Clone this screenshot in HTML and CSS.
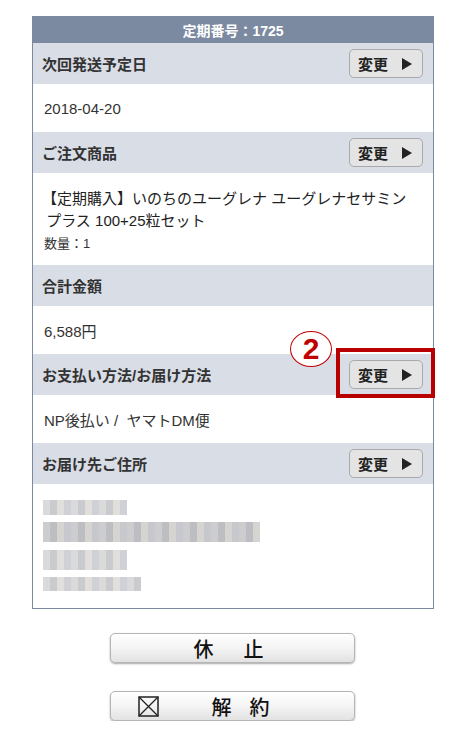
FILE: index.html
```html
<!DOCTYPE html>
<html lang="ja">
<head>
<meta charset="utf-8">
<link rel="stylesheet" href="styles.css">
</head>
<body>
<div class="page">
  <div class="card">
    <div class="title">定期番号：1725</div>

    <div class="head"><span class="label">次回発送予定日</span><span class="btn">変更<span class="tri"></span></span></div>
    <div class="body row">2018-04-20</div>

    <div class="head"><span class="label">ご注文商品</span><span class="btn">変更<span class="tri"></span></span></div>
    <div class="body product">
      <div class="pname">【定期購入】いのちのユーグレナ ユーグレナセサミン<br>&nbsp;プラス 100+25粒セット</div>
      <div class="qty">数量：1</div>
    </div>

    <div class="head"><span class="label">合計金額</span></div>
    <div class="body row">6,588円</div>

    <div class="head mark"><span class="label">お支払い方法/お届け方法</span><span class="btn">変更<span class="tri"></span></span>
      <span class="redbox"></span>
      <span class="circle">2</span>
    </div>
    <div class="body row">NP後払い / &nbsp;ヤマトDM便</div>

    <div class="head"><span class="label">お届け先ご住所</span><span class="btn">変更<span class="tri"></span></span></div>
    <div class="body address">
      <div class="blur b1"></div>
      <div class="blur b2"></div>
      <div class="blur b3"></div>
      <div class="blur b4"></div>
    </div>
  </div>

  <div class="actions">
    <div class="bigbtn pause"><span>休</span><span>止</span></div>
    <div class="bigbtn cancel"><span class="xbox"><svg width="21" height="21" viewBox="0 0 21 21"><rect x="1" y="1" width="19" height="19" fill="none" stroke="#222" stroke-width="1.5"/><path d="M1 1L20 20M20 1L1 20" stroke="#222" stroke-width="1.3"/></svg></span><span>解</span><span>約</span></div>
  </div>
</div>
</body>
</html>
```

FILE: styles.css
```css
* { box-sizing: border-box; }
body {
  margin: 0;
  background: #fff;
  font-family: "Liberation Sans", "Noto Sans CJK JP", sans-serif;
  color: #333;
}
.page {
  padding: 16px 0 0 32px;
  width: 468px;
}
.card {
  width: 402px;
  border: 1px solid #7b8aa0;
  border-top: none;
  background: #fff;
}
.title {
  height: 27px;
  background: #7b8aa0;
  color: #fff;
  font-weight: bold;
  font-size: 14px;
  display: flex;
  align-items: center;
  justify-content: center;
  margin: 0 -1px;
}
.head {
  position: relative;
  height: 41px;
  background: #d9dde6;
  display: flex;
  align-items: center;
  justify-content: space-between;
  padding: 0 10px 0 9px;
}
.label {
  font-size: 15px;
  font-weight: bold;
  color: #333;
}
.btn {
  width: 74px;
  height: 29px;
  border: 1px solid #a9a9a9;
  border-radius: 5px;
  background: #e4e4e4;
  display: flex;
  align-items: center;
  justify-content: center;
  gap: 14px;
  font-size: 15px;
  font-weight: bold;
  color: #222;
  padding-right: 2px;
}
.tri {
  width: 0;
  height: 0;
  border-left: 10px solid #222;
  border-top: 6px solid transparent;
  border-bottom: 6px solid transparent;
}
.body {
  font-size: 15px;
  color: #333;
}
.row {
  height: 48px;
  display: flex;
  align-items: center;
  padding-left: 11px;
}
.product {
  height: 92px;
  padding: 15px 0 0 9px;
}
.pname {
  line-height: 22px;
  font-size: 15px;
  color: #222;
}
.qty {
  font-size: 13px;
  margin-top: 1px;
  padding-left: 2px;
  color: #333;
}
.redbox {
  position: absolute;
  right: -2px;
  top: -6px;
  width: 99px;
  height: 50px;
  border: 4px solid #b90000;
}
.circle {
  position: absolute;
  left: 257px;
  top: -23px;
  width: 42px;
  height: 36px;
  border-radius: 50%;
  border: 1.5px solid #c00000;
  background: #fff;
  color: #c00000;
  font-family: "Liberation Sans", sans-serif;
  font-weight: bold;
  font-size: 30px;
  display: flex;
  align-items: center;
  justify-content: center;
  line-height: 1;
}
.address {
  height: 124px;
  padding: 16px 0 0 10px;
  display: flex;
  flex-direction: column;
}
.blur {
  height: 15px;
  background: repeating-linear-gradient(90deg, #d6d6d8 0 7px, #c4c6ca 7px 14px, #dedcd8 14px 21px, #cbcdd2 21px 28px);
  filter: blur(0.6px);
  opacity: 0.9;
}
.b1 { width: 84px; }
.b2 { width: 217px; height: 20px; margin-top: 7px; background: repeating-linear-gradient(90deg, #c8c8ca 0 7px, #b6b8bc 7px 14px, #d2d0cc 14px 21px, #c0c3c8 21px 28px); }
.b3 { width: 84px; height: 20px; margin-top: 8px; }
.b4 { width: 98px; height: 14px; margin-top: 7px; }
.actions {
  display: flex;
  flex-direction: column;
  gap: 28px;
  margin-top: 24px;
  padding-left: 78px;
}
.bigbtn {
  position: relative;
  width: 245px;
  height: 30px;
  border: 1px solid #b5b5b5;
  border-radius: 5px;
  background: linear-gradient(#ffffff, #f4f4f4 50%, #e2e2e2);
  box-shadow: 0 1px 2px rgba(0,0,0,0.35);
  display: flex;
  align-items: center;
  justify-content: center;
  font-family: "Noto Sans CJK JP", sans-serif;
  font-size: 20px;
  font-weight: 500;
  color: #111;
}
.pause { gap: 30px; padding-right: 8px; }
.cancel { gap: 18px; padding-left: 16px; }
.xbox {
  position: absolute;
  left: 27px;
  top: 4px;
  display: flex;
}
```
